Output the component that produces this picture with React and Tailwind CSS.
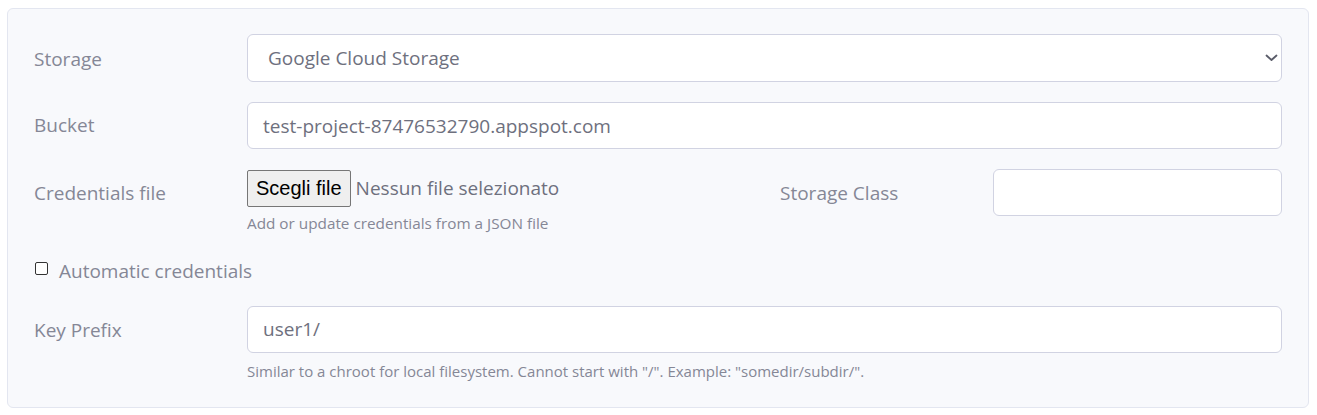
const FONT = { fontFamily: '"Open Sans", "Noto Sans", sans-serif' }

export default function App() {
  return (
    <div className="bg-white w-[1317px] h-[415px] pl-[7px] pt-[8px] pr-[8px]" style={FONT}>
      <div className="h-[400px] border border-[#e3e6f0] rounded-[6px] bg-[#f8f9fc] px-[26px] pt-[25px] text-[#858796]">

        {/* Storage */}
        <div className="flex items-center h-[48px]">
          <label className="w-[213px] text-[19px] pt-[2px]">Storage</label>
          <div className="relative flex-1 h-full">
            <div className="h-full flex items-center bg-white border border-[#d1d3e2] rounded-[6px] pl-[20px] text-[19px] text-[#6e707e]">
              Google Cloud Storage
            </div>
            <svg className="absolute right-[4px] top-[20px]" width="13" height="8" viewBox="0 0 13 8" fill="none">
              <path d="M1.5 1.5 L6.5 6 L11.5 1.5" stroke="#5a5c69" strokeWidth="1.8" strokeLinecap="round" strokeLinejoin="round" />
            </svg>
          </div>
        </div>

        {/* Bucket */}
        <div className="flex items-center h-[47px] mt-[20px]">
          <label className="w-[213px] text-[19px]">Bucket</label>
          <div className="flex-1 h-full flex items-center bg-white border border-[#d1d3e2] rounded-[6px] pl-[15px] pt-[1px] text-[19px] text-[#6e707e]">
            test-project-87476532790.appspot.com
          </div>
        </div>

        {/* Credentials file + Storage class */}
        <div className="flex mt-[20px]">
          <label className="w-[213px] text-[19px] pt-[10px]">Credentials file</label>
          <div className="w-[533px]">
            <div className="flex items-center h-[38px]">
              <span
                className="h-[37px] px-[8px] flex items-center bg-[#efefef] border border-[#767676] rounded-[2px] text-[20px] text-black"
                style={{ fontFamily: '"Liberation Sans", sans-serif' }}
              >Scegli file</span>
              <span className="ml-[5px] text-[19px] text-[#6e707e]">Nessun file selezionato</span>
            </div>
            <p className="text-[15.3px] mt-[5px]">Add or update credentials from a JSON file</p>
          </div>
          <label className="w-[213px] text-[19px] pt-[10px]">Storage Class</label>
          <div className="flex-1 h-[47px] bg-white border border-[#d1d3e2] rounded-[6px]" />
        </div>

        {/* Automatic credentials */}
        <div className="flex items-center mt-[24px] h-[20px]">
          <span className="w-[13px] h-[13px] ml-[1px] border border-[#333] rounded-[2px] bg-white" />
          <span className="ml-[11px] text-[19px] pt-[4px]">Automatic credentials</span>
        </div>

        {/* Key Prefix */}
        <div className="flex mt-[27px]">
          <label className="w-[213px] text-[19px] pt-[10px]">Key Prefix</label>
          <div className="flex-1">
            <div className="h-[47px] flex items-center bg-white border border-[#d1d3e2] rounded-[6px] pl-[15px] text-[19px] text-[#6e707e]">
              user1/
            </div>
            <p className="text-[15px] mt-[7px]">Similar to a chroot for local filesystem. Cannot start with "/". Example: "somedir/subdir/".</p>
          </div>
        </div>
      </div>
    </div>
  )
}
